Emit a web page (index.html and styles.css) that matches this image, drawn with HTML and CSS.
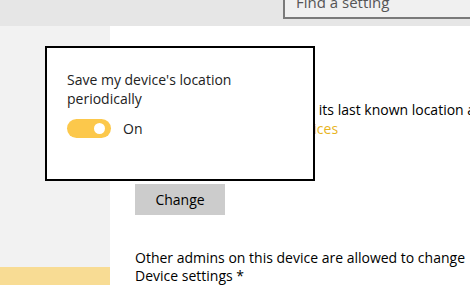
FILE: index.html
```html
<!DOCTYPE html>
<html>
<head>
<meta charset="utf-8">
<link rel="stylesheet" href="styles.css">
</head>
<body>
<div class="page">
  <header class="topbar">
    <div class="search"><span class="search-text">Find a setting</span></div>
  </header>
  <div class="main">
    <aside class="sidebar">
      <div class="spacer"></div>
      <div class="band"></div>
    </aside>
    <section class="content">
      <p class="desc">Windows can regularly save its last known location and<br><span class="link">Learn more about your devices</span></p>
      <button class="btn">Change</button>
      <p class="note">Other admins on this device are allowed to change<br>Device settings *</p>
    </section>
  </div>
  <div class="popup">
    <p class="popup-title">Save my device's location<br>periodically</p>
    <div class="toggle-row">
      <span class="toggle"><span class="knob"></span></span>
      <span class="state">On</span>
    </div>
  </div>
</div>
</body>
</html>
```
FILE: styles.css
```css
html, body {
  margin: 0;
  padding: 0;
}
body {
  font-family: "Open Sans", "Noto Sans", sans-serif;
  font-size: 14px;
  color: #000;
  background: #fff;
  overflow: hidden;
}
.page {
  position: relative;
  width: 470px;
  height: 285px;
  display: flex;
  flex-direction: column;
  overflow: hidden;
}
.topbar {
  height: 26px;
  flex: none;
  background: #e6e6e6;
  display: flex;
  align-items: flex-end;
  padding-left: 283px;
  padding-bottom: 7px;
  box-sizing: border-box;
  overflow: hidden;
}
.search {
  flex: none;
  width: 220px;
  height: 34px;
  box-sizing: border-box;
  border: 2px solid #7a7a7a;
  background: #f0f0f0;
  display: flex;
  align-items: flex-end;
  padding: 0 0 6px 11px;
}
.search-text {
  color: #555;
  font-size: 15px;
  line-height: 18px;
}
.main {
  flex: 1;
  display: flex;
}
.sidebar {
  width: 110px;
  flex: none;
  background: #f2f2f2;
  display: flex;
  flex-direction: column;
}
.spacer {
  flex: 1;
}
.band {
  height: 18px;
  background: #f8dc94;
}
.content {
  flex: 1;
  padding-left: 25px;
  padding-top: 74px;
  white-space: nowrap;
}
.desc {
  margin: 0;
  line-height: 19px;
}
.link {
  color: #e8b422;
}
.btn {
  margin-top: 46px;
  width: 90px;
  height: 31px;
  border: none;
  background: #cccccc;
  font-family: inherit;
  font-size: 14px;
  color: #000;
  padding: 0;
  display: block;
}
.note {
  margin: 34px 0 0;
  line-height: 18px;
}
.popup {
  position: absolute;
  left: 45px;
  top: 46px;
  width: 270px;
  height: 135px;
  box-sizing: border-box;
  border: 2px solid #000;
  background: #fff;
  padding: 22px 0 0 20px;
}
.popup-title {
  margin: 0;
  line-height: 19px;
  color: #222;
}
.toggle-row {
  margin-top: 11px;
  display: flex;
  align-items: center;
}
.toggle {
  width: 44px;
  height: 19px;
  border-radius: 10px;
  background: #fcc84b;
  position: relative;
  display: block;
}
.knob {
  position: absolute;
  right: 6px;
  top: 4px;
  width: 11px;
  height: 11px;
  border-radius: 50%;
  background: #fff;
}
.state {
  margin-left: 12px;
  color: #222;
}
```
